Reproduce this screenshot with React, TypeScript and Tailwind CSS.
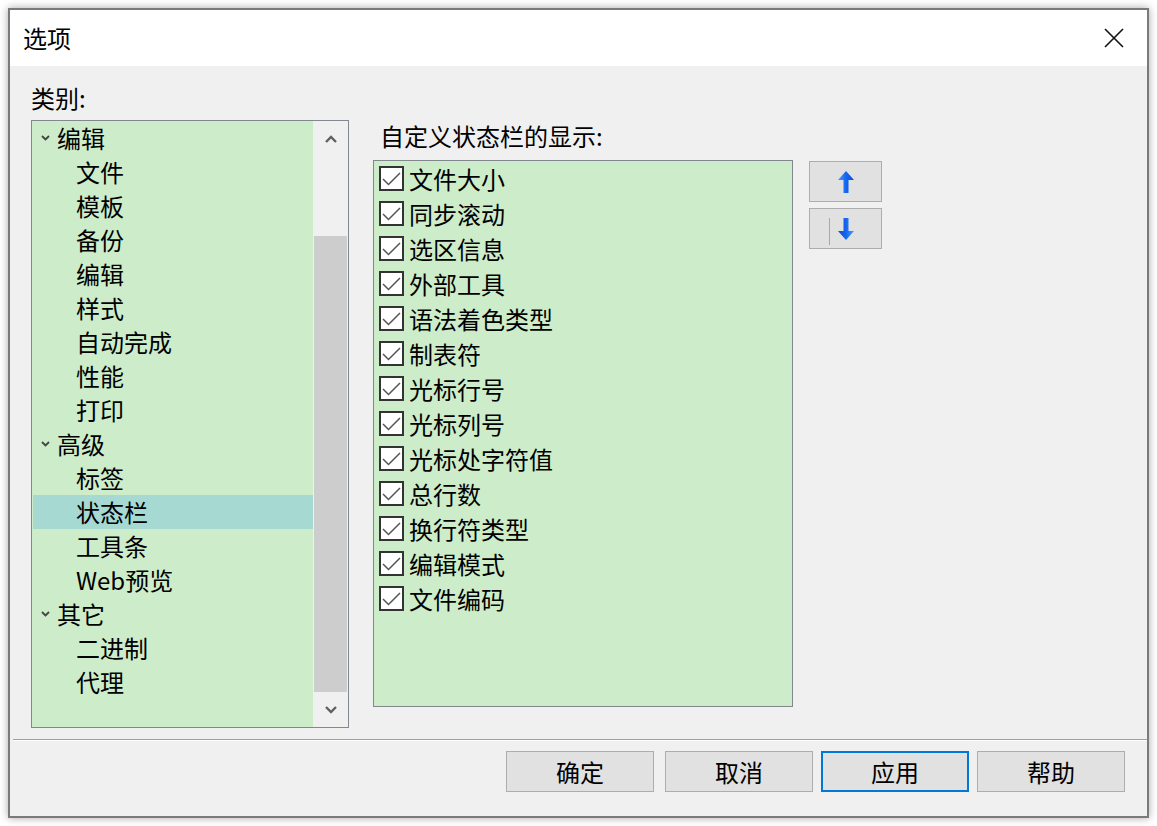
import React from 'react';

const TREE = [
  { label: '编辑', parent: true },
  { label: '文件' },
  { label: '模板' },
  { label: '备份' },
  { label: '编辑' },
  { label: '样式' },
  { label: '自动完成' },
  { label: '性能' },
  { label: '打印' },
  { label: '高级', parent: true },
  { label: '标签' },
  { label: '状态栏', selected: true },
  { label: '工具条' },
  { label: 'Web预览' },
  { label: '其它', parent: true },
  { label: '二进制' },
  { label: '代理' },
];

const FIELDS = [
  '文件大小',
  '同步滚动',
  '选区信息',
  '外部工具',
  '语法着色类型',
  '制表符',
  '光标行号',
  '光标列号',
  '光标处字符值',
  '总行数',
  '换行符类型',
  '编辑模式',
  '文件编码',
];

const Chevron = ({ up = false, className = '' }: { up?: boolean; className?: string }) => (
  <svg width="12" height="8" viewBox="0 0 12 8" className={className}>
    <path
      d={up ? 'M1 7 L6 2 L11 7' : 'M1 1 L6 6 L11 1'}
      fill="none"
      stroke="#606060"
      strokeWidth="2.4"
    />
  </svg>
);

const Checkbox = () => (
  <div className="w-[25px] h-[25px] border-2 border-[#333333] bg-white flex items-center justify-center shrink-0">
    <svg width="21" height="21" viewBox="0 0 21 21">
      <path d="M2 11 L7.5 16.5 L19 5" fill="none" stroke="#555555" strokeWidth="1.5" />
    </svg>
  </div>
);

const Arrow = ({ down = false }: { down?: boolean }) => (
  <svg width="18" height="24" viewBox="0 0 18 24" className={down ? 'rotate-180' : ''}>
    <defs>
      <linearGradient id={down ? 'gd' : 'gu'} x1="0" y1="0" x2="1" y2="0">
        <stop offset="0" stopColor="#4a9bff" />
        <stop offset="0.5" stopColor="#1466f0" />
        <stop offset="1" stopColor="#0a4fd0" />
      </linearGradient>
    </defs>
    <path
      d="M9 1 L17 10 L11.5 10 L11.5 23 L6.5 23 L6.5 10 L1 10 Z"
      fill={`url(#${down ? 'gd' : 'gu'})`}
    />
  </svg>
);

const Button = ({ label, focused = false, className = '' }: { label: string; focused?: boolean; className?: string }) => (
  <div
    className={`w-[148px] h-[41px] bg-[#e1e1e1] flex items-center justify-center text-[24px] leading-[30px] text-black ${
      focused ? 'border-2 border-[#0078d7]' : 'border border-[#adadad]'
    } ${className}`}
  >
    {label}
  </div>
);

export default function App() {
  return (
    <div className="w-[1157px] h-[826px] bg-white pl-[8px] pt-[8px] font-['Noto_Sans_CJK_SC','Noto_Sans',sans-serif] text-black">
      <div className="w-[1141px] h-[810px] border-2 border-[#7a7a7a] shadow-[0_0_8px_rgba(0,0,0,0.35)] flex flex-col bg-[#f0f0f0]">
        {/* title bar */}
        <div className="h-[56px] bg-white flex items-center justify-between pl-[13px] pr-[23px] shrink-0">
          <span className="text-[24px] leading-[30px]">选项</span>
          <svg width="20" height="20" viewBox="0 0 20 20">
            <path d="M1 1 L19 19 M19 1 L1 19" stroke="#111" strokeWidth="1.6" />
          </svg>
        </div>

        {/* content */}
        <div className="h-[673px] flex shrink-0">
          <div className="ml-[21px] pt-[17px] flex flex-col">
            <div className="text-[24px] leading-[30px] mb-[7px]">类别:</div>
            <div className="w-[318px] h-[608px] border border-[#828790] flex">
              <div className="flex-1 bg-[#cdecc9] pl-[1px]">
                {TREE.map((item, i) => (
                  <div
                    key={i}
                    className={`h-[34px] flex items-center text-[24px] leading-[30px] ${
                      item.selected ? 'bg-[#a5d9d2]' : ''
                    } ${item.parent ? 'pl-[8px]' : 'pl-[43px]'}`}
                  >
                    {item.parent && (
                      <svg width="9" height="6" viewBox="0 0 9 6" className="mr-[7px] shrink-0">
                        <path d="M1 1 L4.5 4.5 L8 1" fill="none" stroke="#444" strokeWidth="1.8" />
                      </svg>
                    )}
                    <span>{item.label}</span>
                  </div>
                ))}
              </div>
              <div className="w-[35px] bg-[#f0f0f0] flex flex-col">
                <div className="h-[35px] flex items-center justify-center">
                  <Chevron up />
                </div>
                <div className="flex-1 flex flex-col pt-[80px] px-[1px]">
                  <div className="flex-1 bg-[#cdcdcd]" />
                </div>
                <div className="h-[35px] flex items-center justify-center">
                  <Chevron />
                </div>
              </div>
            </div>
          </div>

          <div className="ml-[24px] pt-[55px] flex flex-col">
            <div className="text-[24px] leading-[30px] ml-[7px] mb-[9px]">自定义状态栏的显示:</div>
            <div className="w-[420px] h-[547px] border border-[#828790] bg-[#cdecc9]">
              {FIELDS.map((f) => (
                <div key={f} className="h-[35px] flex items-center pl-[5px]">
                  <Checkbox />
                  <span className="ml-[5px] text-[24px] leading-[30px]">{f}</span>
                </div>
              ))}
            </div>
          </div>

          <div className="ml-[16px] pt-[95px] flex flex-col gap-[6px]">
            <div className="w-[73px] h-[41px] bg-[#e1e1e1] border border-[#adadad] flex items-center justify-center">
              <Arrow />
            </div>
            <div className="relative w-[73px] h-[41px] bg-[#e1e1e1] border border-[#adadad] flex items-center justify-center">
              <div className="absolute left-[19px] top-[9px] w-px h-[27px] bg-[#a8a8a8]" />
              <Arrow down />
            </div>
          </div>
        </div>

        {/* separator */}
        <div className="ml-[3px] h-[2px] border-t border-[#a0a0a0] border-b border-b-white shrink-0" />

        {/* footer */}
        <div className="flex justify-end pt-[10px] pr-[22px]">
          <Button label="确定" />
          <Button label="取消" className="ml-[11px]" />
          <Button label="应用" focused className="ml-[8px]" />
          <Button label="帮助" className="ml-[8px]" />
        </div>
      </div>
    </div>
  );
}
